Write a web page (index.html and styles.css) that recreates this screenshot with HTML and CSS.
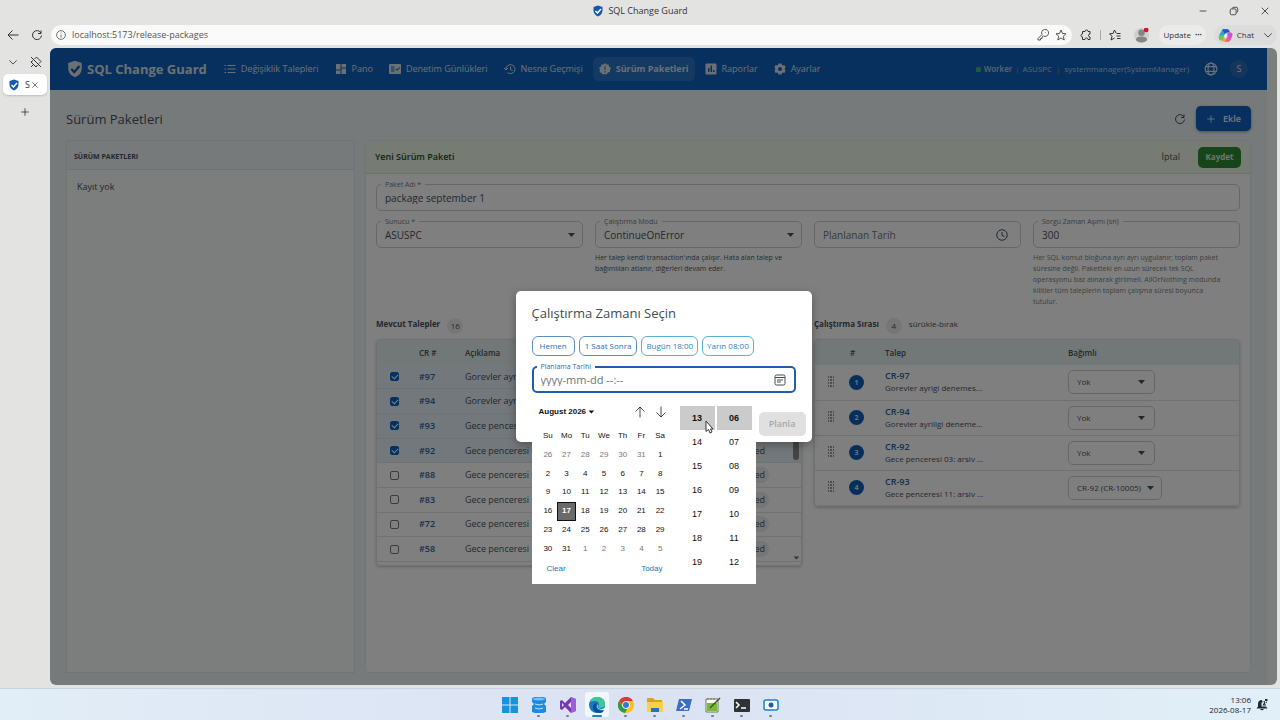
FILE: index.html
```html
<!DOCTYPE html>
<html lang="tr">
<head>
<meta charset="utf-8">
<title>SQL Change Guard</title>
<link rel="stylesheet" href="styles.css">
</head>
<body>
<svg class="defs" aria-hidden="true">
  <symbol id="shield" viewBox="0 0 24 24"><path fill="currentColor" d="M12 1 3 4v7c0 6 4 10 9 12 5-2 9-6 9-12V4z"/><path class="tick" d="m7 12 4 4 7-8"/></symbol>
  <symbol id="caret" viewBox="0 0 10 10"><path fill="currentColor" d="M2 3h7L5.500 7z"/></symbol>
  <symbol id="reload" viewBox="0 0 24 24"><path class="ln" d="M20 8A9 9 0 1 0 21 13M20 3v6h-6"/></symbol>
  <symbol id="chev" viewBox="0 0 24 24"><path class="ln" d="m3 8 9 9 9-9"/></symbol>
  <symbol id="cross" viewBox="0 0 24 24"><path class="ln" d="m4 4 16 16M20 4 4 20"/></symbol>
  <symbol id="plus" viewBox="0 0 24 24"><path class="ln" d="M12 3v18M3 12h18"/></symbol>
  <symbol id="grip" viewBox="0 0 8 12"><path fill="currentColor" d="M1 1h1v2H1zM3 1h2v2H3zM6 1h1v2H6zM1 4h1v2H1zM3 4h2v2H3zM6 4h1v2H6zM1 7h1v2H1zM3 7h2v2H3zM6 7h1v2H6zM1 10h1v2H1zM3 10h2v2H3zM6 10h1v2H6z"/></symbol>
</svg>

<header class="titlebar">
  <div class="wintitle"><svg class="i12 blue"><use href="#shield"/></svg><span>SQL Change Guard</span></div>
  <div class="winbtns">
    <button aria-label="Minimize"><svg class="i10" viewBox="0 0 24 24"><path class="ln" d="M4 12h16"/></svg></button>
    <button aria-label="Restore"><svg class="i10" viewBox="0 0 24 24"><rect class="ln" x="3" y="7" width="14" height="14" rx="3"/><path class="ln" d="M8 6q0-3 4-3h5q4 0 4 4v5q0 3-3 4"/></svg></button>
    <button aria-label="Close"><svg class="i10"><use href="#cross"/></svg></button>
  </div>
</header>

<div class="toolbar">
  <button class="back" aria-label="Back"><svg class="i12" viewBox="0 0 24 24"><path class="ln" d="M23 12H2M11 3l-9 9 9 9"/></svg></button>
  <button aria-label="Reload"><svg class="i12"><use href="#reload"/></svg></button>
  <div class="omnibox">
    <svg class="i10" viewBox="0 0 24 24"><circle class="ln" cx="12" cy="12" r="10.500"/><path class="ln" d="M12 11v7M12 6v2"/></svg>
    <input aria-label="Address" value="localhost:5173/release-packages">
    <svg class="i12" viewBox="0 0 24 24"><path class="ln" d="m10 11-8 8v3h5v-3h3v-3l3-2a7 7 0 1 0-3-3zM17 6v1"/></svg>
    <svg class="i12" viewBox="0 0 24 24"><path class="ln" d="m12 2 3 7 7 .5-5.500 5 2 7.500-6.500-4-6.500 4 2-7.500L2 9.500 9 9z"/></svg>
  </div>
  <button class="ext" aria-label="Extensions"><svg class="i12" viewBox="0 0 24 24"><path class="ln" d="M5 5h5a3 3 0 0 1 6 0h4v5a3 3 0 0 0 0 6v5h-4a3 3 0 0 0-6 0H5v-5a3 3 0 0 1 0-6z"/></svg></button>
  <span class="tsep"></span>
  <button aria-label="Favorites"><svg class="i12" viewBox="0 0 24 24"><path class="ln" d="m14 8-3-6-3 7-7 .5 5 5L4 22l7-4M15 9h8M15 14h8M16 19h7"/></svg></button>
  <button class="profile" aria-label="Profile"><svg viewBox="0 0 16 16"><circle cx="8" cy="8" r="8" fill="#cfcfcf"/><circle cx="8" cy="5" r="3.500" fill="#858585"/><path d="M2 13q0-4 6-4t6 4q-6 5-12 0" fill="#858585"/><circle cx="13" cy="2" r="2.500" fill="#d8122c"/></svg></button>
  <button class="update">Update <b>···</b></button>
  <button class="chat"><svg viewBox="0 0 24 24"><path d="M7 2h9l-5 14H5Q0 16 2 11z" fill="#24a7dd"/><path d="M7 2h8q3 0 4 5h-5q-2 0-3 3z" fill="#1b58c8"/><path d="M2 11l-1 4q0 4 4 5 3 1 4-3l1-5z" fill="#7bc04b"/><path d="M5 19q2 3 5 3h5q3 0 5-5h-8q-2 0-3-2-1 5-4 4" fill="#f4a43c"/><path d="M15 7h5q4 0 3 5l-2 5q-1 4-5 5-2-2-1-7z" fill="#d152c6"/><path d="M14 15l6 2q-2 5-5 5h-4z" fill="#f0607a"/><path d="M11 9h4l-2 6H9z" fill="#f2f2f2"/></svg>Chat <svg class="i10"><use href="#chev"/></svg></button>
</div>

<div class="frame">
  <aside class="tabs">
    <div class="tabtools">
      <button aria-label="Tabs"><svg class="i10"><use href="#chev"/></svg></button>
      <button aria-label="Unpin"><svg class="i12" viewBox="0 0 24 24"><path class="ln" d="M2 2l20 20M9 6l4-4 9 9-4 4M6 9l-4 3 10 10 3-4M2 22l6-6"/></svg></button>
    </div>
    <div class="tab"><svg class="i12 blue"><use href="#shield"/></svg><span>S</span><button aria-label="Close tab"><svg class="i8"><use href="#cross"/></svg></button></div>
    <button class="newtab" aria-label="New tab"><svg class="i10"><use href="#plus"/></svg></button>
  </aside>

  <div class="view">
    <div class="app">
      <nav class="nav">
        <div class="brand"><svg class="i18"><use href="#shield"/></svg><span>SQL Change Guard</span></div>
        <a href="#"><svg class="i12" viewBox="0 0 24 24"><path fill="currentColor" d="M1 4h3v2H1zM7 4h16v2H7zM1 11h3v2H1zM7 11h16v2H7zM1 18h3v2H1zM7 18h16v2H7z"/></svg>Değişiklik Talepleri</a>
        <a href="#"><svg class="i12" viewBox="0 0 24 24"><path fill="currentColor" d="M2 2h9v11H2zM13 2h9v7h-9zM13 11h9v11h-9zM2 15h9v7H2z"/></svg>Pano</a>
        <a href="#"><svg class="i12" viewBox="0 0 24 24"><path fill="currentColor" fill-rule="evenodd" d="M2 2h20q2 0 2 2v16q0 2-2 2H2q-2 0-2-2V4q0-2 2-2m2 5v2h7V7zm0 4v2h7v-2zm0 4v2h7v-2zm9-3 3 4 6-6-1-2-5 5-2-2z"/></svg>Denetim Günlükleri</a>
        <a href="#"><svg class="i12" viewBox="0 0 24 24"><path class="ln" d="M4 12a9 9 0 1 1 3 7M0 10l4 4 4-4M13 7v6l4 2"/></svg>Nesne Geçmişi</a>
        <a href="#" class="on"><svg class="i12" viewBox="0 0 24 24"><path fill="currentColor" fill-rule="evenodd" d="m12 0 3 3h4l1 4 4 3-2 4v4l-4 1-3 4-3-1-4 1-3-3-4-2 1-4-2-4 4-3 1-4h4zm-1 6v8h2V6zm0 10v3h2v-3z"/></svg>Sürüm Paketleri</a>
        <a href="#"><svg class="i12" viewBox="0 0 24 24"><path fill="currentColor" fill-rule="evenodd" d="M3 1h18q2 0 2 2v18q0 2-2 2H3q-2 0-2-2V3q0-2 2-2m3 9v8h3v-8zm5-5v13h3V5zm5 9v4h3v-4z"/></svg>Raporlar</a>
        <a href="#"><svg class="i12" viewBox="0 0 24 24"><path fill="currentColor" fill-rule="evenodd" d="M9 1h6l1 3 2 1 3-1 2 5-2 3 2 3-2 5-3-1-2 1-1 3H9l-1-3-2-1-3 1-2-5 2-3-2-3 2-5 3 1 2-1zm3 7a4 4 0 1 0 0 8 4 4 0 0 0 0-8"/></svg>Ayarlar</a>
        <div class="status"><i></i><b>Worker</b><em>|</em><span>ASUSPC</span><em class="wide">|</em><span>systemmanager(SystemManager)</span></div>
        <button class="globe" aria-label="Dil"><svg class="i14" viewBox="0 0 24 24"><circle class="ln" cx="12" cy="12" r="10"/><ellipse class="ln" cx="12" cy="12" rx="5" ry="10"/><path class="ln" d="M3 8h18M3 16h18"/></svg></button>
        <button class="avatar">S</button>
      </nav>

      <div class="pagehead">
        <h1>Sürüm Paketleri</h1>
        <button class="refresh" aria-label="Yenile"><svg class="i12"><use href="#reload"/></svg></button>
        <button class="add"><svg class="i10"><use href="#plus"/></svg>Ekle</button>
      </div>

      <main class="cols">
        <section class="list">
          <h2>SÜRÜM PAKETLERI</h2>
          <p>Kayıt yok</p>
        </section>
        <section class="editor">
          <header><h2>Yeni Sürüm Paketi</h2><button class="cancel">İptal</button><button class="save">Kaydet</button></header>
          <div class="form">
            <div class="field"><label for="name">Paket Adı *</label><input id="name" value="package september 1"></div>
            <div class="four">
              <div><div class="field"><label for="srv">Sunucu *</label><select id="srv"><option>ASUSPC</option></select><svg class="i10 arr"><use href="#caret"/></svg></div></div>
              <div><div class="field"><label for="mode">Çalıştırma Modu</label><select id="mode"><option>ContinueOnError</option></select><svg class="i10 arr"><use href="#caret"/></svg></div>
                <p class="help dark">Her talep kendi transaction'ında çalışır. Hata alan talep ve bağımlıları atlanır, diğerleri devam eder.</p></div>
              <div><div class="field"><input aria-label="Planlanan Tarih" placeholder="Planlanan Tarih"><svg class="i12 clock" viewBox="0 0 24 24"><circle class="ln" cx="12" cy="12" r="10.500"/><path class="ln" d="M12 6v7l5 2"/></svg></div></div>
              <div><div class="field"><label for="tmo">Sorgu Zaman Aşımı (sn)</label><input id="tmo" value="300"></div>
                <p class="help">Her SQL komut bloğuna ayrı ayrı uygulanır; toplam paket süresine değil. Paketteki en uzun sürecek tek SQL operasyonu baz alınarak girilmeli. AllOrNothing modunda kilitler tüm taleplerin toplam çalışma süresi boyunca tutulur.</p></div>
            </div>
            <div class="two">
              <div>
                <div class="subhead"><h3>Mevcut Talepler</h3><span class="count">16</span></div>
                <div class="tbox avail">
                  <table>
                    <thead><tr><th class="c1"></th><th class="c2">CR #</th><th>Açıklama</th><th class="c4"></th></tr></thead>
                    <tbody>
                      <tr class="sel"><td><input type="checkbox" aria-label="#97" checked></td><td><a href="#">#97</a></td><td>Gorevler ayrigi</td><td><span class="chip">Approved</span></td></tr>
                      <tr class="sel"><td><input type="checkbox" aria-label="#94" checked></td><td><a href="#">#94</a></td><td>Gorevler ayriligi</td><td><span class="chip">Approved</span></td></tr>
                      <tr class="sel"><td><input type="checkbox" aria-label="#93" checked></td><td><a href="#">#93</a></td><td>Gece penceresi 11</td><td><span class="chip">Approved</span></td></tr>
                      <tr class="sel"><td><input type="checkbox" aria-label="#92" checked></td><td><a href="#">#92</a></td><td>Gece penceresi 03</td><td><span class="chip">Approved</span></td></tr>
                      <tr><td><input type="checkbox" aria-label="#88"></td><td><a href="#">#88</a></td><td>Gece penceresi 0</td><td><span class="chip">Approved</span></td></tr>
                      <tr><td><input type="checkbox" aria-label="#83"></td><td><a href="#">#83</a></td><td>Gece penceresi 0</td><td><span class="chip">Approved</span></td></tr>
                      <tr><td><input type="checkbox" aria-label="#72"></td><td><a href="#">#72</a></td><td>Gece penceresi 1</td><td><span class="chip">Approved</span></td></tr>
                      <tr><td><input type="checkbox" aria-label="#58"></td><td><a href="#">#58</a></td><td>Gece penceresi 1</td><td><span class="chip">Approved</span></td></tr>
                    </tbody>
                  </table>
                  <div class="sbar"><i></i><svg class="i8"><use href="#caret"/></svg></div>
                </div>
              </div>
              <div>
                <div class="subhead"><h3>Çalıştırma Sırası</h3><span class="count">4</span><small>sürükle-bırak</small></div>
                <div class="tbox order">
                  <table>
                    <thead><tr><th class="d1"></th><th class="d2">#</th><th class="d3">Talep</th><th>Bağımlı</th></tr></thead>
                    <tbody>
                      <tr><td><svg class="grip"><use href="#grip"/></svg></td><td><b class="num">1</b></td><td><a href="#">CR-97</a><p>Gorevler ayrigi denemes...</p></td><td><div class="dd"><select aria-label="Bağımlı CR-97"><option>Yok</option></select><svg class="i10 arr"><use href="#caret"/></svg></div></td></tr>
                      <tr><td><svg class="grip"><use href="#grip"/></svg></td><td><b class="num">2</b></td><td><a href="#">CR-94</a><p>Gorevler ayriligi deneme...</p></td><td><div class="dd"><select aria-label="Bağımlı CR-94"><option>Yok</option></select><svg class="i10 arr"><use href="#caret"/></svg></div></td></tr>
                      <tr><td><svg class="grip"><use href="#grip"/></svg></td><td><b class="num">3</b></td><td><a href="#">CR-92</a><p>Gece penceresi 03: arsiv ...</p></td><td><div class="dd"><select aria-label="Bağımlı CR-92"><option>Yok</option></select><svg class="i10 arr"><use href="#caret"/></svg></div></td></tr>
                      <tr><td><svg class="grip"><use href="#grip"/></svg></td><td><b class="num">4</b></td><td><a href="#">CR-93</a><p>Gece penceresi 11: arsiv ...</p></td><td><div class="dd wide"><select aria-label="Bağımlı CR-93"><option>CR-92 (CR-10005)</option></select><svg class="i10 arr"><use href="#caret"/></svg></div></td></tr>
                    </tbody>
                  </table>
                </div>
              </div>
            </div>
          </div>
        </section>
      </main>
    </div>

    <div class="overlay">
      <div class="dialog" role="dialog" aria-labelledby="dt">
        <h2 id="dt">Çalıştırma Zamanı Seçin</h2>
        <div class="quick"><button>Hemen</button><button>1 Saat Sonra</button><button class="lt">Bugün 18:00</button><button class="lt">Yarın 08:00</button></div>
        <div class="field focus"><label for="when">Planlama Tarihi</label><input id="when" placeholder="yyyy-mm-dd --:--"><svg class="i12 clock" viewBox="0 0 24 24"><rect class="ln" x="2" y="2" width="20" height="20" rx="3"/><path class="ln" d="M2 7h20M6 12h12M6 16h8"/></svg></div>
        <button class="plan" disabled>Planla</button>
        <div class="picker">
          <div class="cal">
            <div class="calhead"><button class="month">August 2026<svg class="i8"><use href="#caret"/></svg></button>
              <button aria-label="Previous month"><svg class="i12" viewBox="0 0 24 24"><path class="ln" d="M12 23V2M3 11l9-9 9 9"/></svg></button>
              <button aria-label="Next month"><svg class="i12" viewBox="0 0 24 24"><path class="ln" d="M12 1v21M3 13l9 9 9-9"/></svg></button></div>
            <table>
              <tbody>
                <tr><th>Su</th><th>Mo</th><th>Tu</th><th>We</th><th>Th</th><th>Fr</th><th>Sa</th></tr>
                <tr><td class="o">26</td><td class="o">27</td><td class="o">28</td><td class="o">29</td><td class="o">30</td><td class="o">31</td><td>1</td></tr>
                <tr><td>2</td><td>3</td><td>4</td><td>5</td><td>6</td><td>7</td><td>8</td></tr>
                <tr><td>9</td><td>10</td><td>11</td><td>12</td><td>13</td><td>14</td><td>15</td></tr>
                <tr><td>16</td><td class="today">17</td><td>18</td><td>19</td><td>20</td><td>21</td><td>22</td></tr>
                <tr><td>23</td><td>24</td><td>25</td><td>26</td><td>27</td><td>28</td><td>29</td></tr>
                <tr><td>30</td><td>31</td><td class="o">1</td><td class="o">2</td><td class="o">3</td><td class="o">4</td><td class="o">5</td></tr>
              </tbody>
            </table>
            <div class="calfoot"><button>Clear</button><button>Today</button></div>
          </div>
          <div class="times"><button class="cur">13</button><button>14</button><button>15</button><button>16</button><button>17</button><button>18</button><button>19</button></div>
          <div class="times"><button class="cur">06</button><button>07</button><button>08</button><button>09</button><button>10</button><button>11</button><button>12</button></div>
          <svg class="cursor" viewBox="0 0 9 14"><path d="M1 1v10.500l2.500-2 1.500 3.500 2-1-1.500-3H8z" fill="#fff" stroke="#333"/></svg>
        </div>
      </div>
    </div>
  </div>
</div>

<footer class="taskbar">
  <div class="apps">
    <button aria-label="Start"><svg viewBox="0 0 16 16"><path fill="#1495dc" d="M0 0h7.500v7.500H0zM8.500 0H16v7.500H8.500zM0 8.500h7.500V16H0zM8.500 8.500H16V16H8.500z"/></svg></button>
    <button class="run" aria-label="Database"><svg viewBox="0 0 16 16"><path fill="#2088df" d="M1 1q7-3 14 0v4l-2 2 2 2v6q-7 3-14 0V9l2-2-2-2z"/><path fill="#6cc7f7" d="M1 2q7-3 14 0-7 3-14 0"/><path fill="none" stroke="#bfe6fb" d="M4 7q4 2 8 0M4 11q4 2 8 0"/></svg></button>
    <button class="run" aria-label="Visual Studio"><svg viewBox="0 0 16 16"><path fill="#7b35b8" d="m11 0 5 2v12l-5 2-6-6-3 3-2-1V4l2-1 3 3zm0 5L8 8l3 3zM2 6v4l2-2z"/><path fill="#b57ae6" d="m11 0 5 2v12l-5 2z" opacity=".6"/></svg></button>
    <button class="run active" aria-label="Edge"><svg viewBox="0 0 16 16"><circle cx="8" cy="8" r="8" fill="#1479c4"/><path fill="#43c59a" d="M1 5Q3 0 8 0q8 0 8 7 0 4-5 4-3-1-1-3 0-4-4-4-3 0-5 1"/><path fill="#0d4d94" d="M4 9q-1 7 7 7 3 0 4-3-5 2-7-1Q6 9 8 6 5 6 4 9"/><path fill="#e9f5fb" d="M9 7q-2 5 4 5l3-1-1 2q-7 0-7-4z"/></svg></button>
    <button class="run" aria-label="Chrome"><svg viewBox="0 0 16 16"><circle cx="8" cy="8" r="8" fill="#fbc116"/><path fill="#dc3c2e" d="M1 4a8 8 0 0 1 14 0H8L5 9z"/><path fill="#2b9b49" d="m1 4 4 6 4 2-2 4A8 8 0 0 1 1 4"/><circle cx="8" cy="8" r="3.800" fill="#fff"/><circle cx="8" cy="8" r="3" fill="#3476dc"/></svg></button>
    <button class="run" aria-label="Explorer"><svg viewBox="0 0 16 16"><path fill="#dda21b" d="M0 1h6l2 2h7v5H0z"/><path fill="#fcd04d" d="M0 5h16v10H0z"/><path fill="#1f78b8" d="M4 11h8v4H4z"/></svg></button>
    <button class="run" aria-label="PowerShell"><svg viewBox="0 0 16 16"><path fill="#3c6fc4" d="M3 2h13l-3 12H0z"/><path fill="none" stroke="#fff" stroke-width="1.500" d="m5 4 4 4-5 4M8 12h4"/></svg></button>
    <button class="run" aria-label="Notepad++"><svg viewBox="0 0 16 16"><path fill="#fafaf2" stroke="#6d7a55" d="M1 2h12v13H1z"/><path fill="#75bd34" d="M2 6h10v8H2z"/><path stroke="#44512b" stroke-width="1.500" d="M5 11 15 1"/><path stroke="#779" d="M3 1v2M6 1v2M9 1v2"/></svg></button>
    <button class="run" aria-label="Terminal"><svg viewBox="0 0 16 16"><rect y="2" width="16" height="13" rx="1" fill="#2f3336"/><path fill="none" stroke="#fff" stroke-width="1.500" d="m2 5 3 3-3 3M7 11h5"/></svg></button>
    <button class="run" aria-label="Recorder"><svg viewBox="0 0 16 16"><rect x="1" y="3" width="14" height="10" rx="2" fill="#fff" stroke="#1780cf" stroke-width="1.500"/><circle cx="8" cy="8" r="2.500" fill="#28589b"/></svg></button>
  </div>
  <div class="tray"><div><div>13:06</div><div>2026-08-17</div></div><svg class="i12" viewBox="0 0 24 24"><path fill="#1d2a31" d="M4 10q0-8 8-8l1 5h-2v8h9l3 4H1l3-4zM8 20h8q-4 5-8 0"/><path fill="#1d2a31" d="M13 5h4l-4 8h7v-2h-3l4-7h-8zM18 0h5v4h-3l2 4h-4z"/></svg></div>
</footer>
</body>
</html>
```

FILE: styles.css
```css
* { box-sizing: border-box; }
body { margin: 0; height: 100vh; display: flex; flex-direction: column; overflow: hidden; background: #e3e3e2; color: #333; font-family: "Open Sans", "Noto Sans", sans-serif; font-size: 9px; line-height: 12px; }
h1, h2, h3, p { margin: 0; }
button, input, select { font: inherit; color: inherit; background: none; border: 0; padding: 0; margin: 0; min-width: 0; }
button { display: flex; align-items: center; justify-content: center; }
a { text-decoration: none; color: inherit; }
svg { flex: none; display: block; }
.defs { position: absolute; width: 0; height: 0; }
.ln { fill: none; stroke: currentColor; stroke-width: 2; }
.tick { fill: none; stroke: var(--tick, #1458a4); stroke-width: 3; }
.blue { color: #1459ac; --tick: #fff; }
.i8 { width: 8px; height: 8px; }
.i10 { width: 10px; height: 10px; }
.i12 { width: 12px; height: 12px; }
.i14 { width: 14px; height: 14px; }
.i18 { width: 18px; height: 18px; }

.titlebar { height: 22px; display: flex; align-items: center; justify-content: flex-end; position: relative; flex: none; }
.wintitle { position: absolute; left: 0; right: 0; display: flex; justify-content: center; align-items: center; gap: 4px; }
.winbtns { display: flex; gap: 21px; padding-right: 10px; }
.toolbar { height: 26px; flex: none; display: flex; align-items: center; padding: 0 3px 0 7px; gap: 8px; }
.back { margin-right: 4px; }
.omnibox { flex: 1; height: 20px; background: #fafafa; border-radius: 10px; display: flex; align-items: center; gap: 6px; padding: 0 5px; color: #555; }
.omnibox input { flex: 1; outline: none; }
.tsep { width: 1px; height: 10px; background: #aaa; }
.profile svg { width: 15px; height: 15px; }
.profile { margin: 0 2px 0 5px; }
.update, .chat { height: 20px; border-radius: 10px; background: #ebebeb; padding: 0 4px; gap: 4px; font-size: 8px; }
.chat { gap: 4px; background: #dcdcdc; }
.chat > svg:first-child { width: 15px; height: 15px; }
.chat .i10 { margin-left: 5px; }

.frame { flex: 1; display: flex; min-height: 0; padding-right: 3px; }
.tabs { width: 50px; flex: none; padding: 8px 3px; display: flex; flex-direction: column; }
.tabtools { display: flex; justify-content: space-between; padding: 0 5px; }
.tab { margin-top: 6px; height: 21px; background: #fff; border-radius: 5px; display: flex; align-items: center; padding: 0 5px; gap: 5px; box-shadow: 0 1px 2px #bbb; }
.tab span { width: 5px; overflow: hidden; margin-right: -4px; }
.newtab { margin: 12px auto 0 17px; height: 10px; }

.view { flex: 1; position: relative; overflow: hidden; border-radius: 6px; background: #f8fafb; padding-right: 10px; min-width: 0; }
.app { height: 100%; display: flex; flex-direction: column; background: #edf4f6; color: #47505a; }
.nav { height: 42px; flex: none; background: #0e60bd; color: #d6e1ea; display: flex; align-items: center; padding: 0 19px 0 16px; gap: 4px; }
.brand { display: flex; align-items: center; gap: 3px; font-size: 13px; font-weight: 700; margin-right: 7px; }
.nav a { display: flex; align-items: center; gap: 5px; height: 24px; padding: 0 6px; border-radius: 5px; white-space: nowrap; }
.nav a.on { background: #2872c4; font-weight: 700; }
.status { margin-left: auto; display: flex; align-items: center; gap: 3px; font-size: 8px; color: #b3cbe2; }
.status b { font-weight: 600; }
.status i { width: 5px; height: 5px; background: #4caf70; border-radius: 1px; }
.status em { font-style: normal; color: #6b98c8; }
.status em.wide { margin: 0 1px; }
.globe { margin: 0 8px 0 11px; }
.avatar { width: 18px; height: 18px; border-radius: 50%; background: #2a6cb4; }
.pagehead { display: flex; align-items: center; padding: 16px 16px 9px; height: 50px; flex: none; }
h1 { font-size: 13px; line-height: 20px; font-weight: 500; margin-right: auto; }
.refresh { margin-right: 10px; }
.add { background: #0e60c0; color: #e8f0fa; width: 55px; height: 25px; border-radius: 5px; gap: 7px; font-weight: 600; box-shadow: 0 1px 3px #999; }
.cols { flex: 1; display: grid; grid-template-columns: 289px 1fr; gap: 10px; padding: 0 16px 12px; min-height: 0; }
.list { border: 1px solid #e1e8eb; background: #f9fafb; }
.list h2 { background: #eff5f7; font-size: 7px; font-weight: 700; padding: 10px 7px 6px; border-bottom: 1px solid #dfe6e9; }
.list p { padding: 11px 10px; }
.editor { background: #fff; border: 1px solid #e5eaec; border-radius: 4px; min-width: 0; }
.editor > header { background: #ecf8e9; height: 33px; display: flex; align-items: center; padding: 0 9px; border-bottom: 1px solid #d5e2d2; border-radius: 4px 4px 0 0; }
.editor > header h2 { font-size: 9px; font-weight: 600; color: #1a4a20; margin-right: auto; }
.cancel { margin-right: 18px; }
.save { width: 43px; height: 21px; background: #2d8a34; color: #d9eeda; border-radius: 5px; font-weight: 700; font-size: 8px; }
.form { padding: 10px 10px 0; }
.field { height: 27px; border: 1px solid #cdcfd0; border-radius: 5px; position: relative; display: flex; align-items: center; padding: 0 8px; font-size: 10px; }
.field label { position: absolute; top: -5px; left: 4px; padding: 0 4px; line-height: 9px; font-size: 7px; color: #777; background: #fff; }
.field input { flex: 1; outline: none; }
.field input::placeholder { color: #6b747a; opacity: 1; }
.field select, .dd select { flex: 1; appearance: none; outline: none; }
.arr { pointer-events: none; }
.field .arr { margin-right: -2px; }
.clock { margin-right: 4px; }
.four { display: grid; grid-template-columns: repeat(4, 1fr); gap: 12px; margin-top: 10px; }
.help { font-size: 7px; line-height: 11px; margin-top: 4px; padding-right: 13px; color: #777f84; }
.help.dark { color: #4d565b; }
.two { display: grid; grid-template-columns: 1fr 1fr; gap: 12px; margin-top: 5px; }
.subhead { display: flex; align-items: center; gap: 7px; height: 27px; padding-bottom: 3px; }
h3 { font-size: 8px; font-weight: 700; }
.count { min-width: 16px; height: 16px; line-height: 16px; text-align: center; border-radius: 8px; background: #ececec; font-size: 8px; margin-top: 3px; padding: 0 3px; }
small { font-size: 8px; }
.tbox { border: 1px solid #dde2e4; border-radius: 4px; overflow: hidden; position: relative; box-shadow: 0 1px 3px #c5c5c5; }
.tbox table { width: 100%; border-collapse: collapse; table-layout: fixed; }
.tbox th { background: #e5f0f0; text-align: left; font-size: 8px; font-weight: 600; padding: 0; height: 25px; }
.tbox td { padding: 0; border-bottom: 1px solid #e3e3e3; }
.tbox td a { color: #28619d; font-weight: 600; }
.avail { height: 227px; }
.avail table { height: 222px; }
.c1 { width: 42px; } .c2 { width: 46px; } .c4 { width: 92px; }
.avail td:first-child { padding-left: 13px; }
.sel td { background: #e7f1f8; }
.avail input { appearance: none; display: block; width: 9px; height: 9px; border: 1px solid #777; border-radius: 2px; position: relative; }
.avail input:checked { background: #0d62c2; border-color: #0d62c2; }
.avail input:checked::after { content: ""; position: absolute; left: 2px; top: 0; width: 3px; height: 5px; border: solid #fff; border-width: 0 1px 1px 0; transform: rotate(45deg); }
.chip { display: block; background: #ececec; border-radius: 8px; height: 16px; line-height: 16px; padding: 0 4px; width: 60px; text-align: right; }
.sbar { position: absolute; right: 1px; top: 0; bottom: 3px; width: 8px; }
.sbar i { position: absolute; top: 26px; left: 1px; width: 6px; height: 94px; border-radius: 3px; background: #8a8a8a; }
.sbar svg { position: absolute; bottom: 0; color: #666; }
.d1 { width: 28px; } .d2 { width: 42px; } .d3 { width: 183px; }
.order .d2 { padding-left: 7px; }
.order tbody tr { height: 35px; }
.order td p { font-size: 8px; line-height: 12px; }
.grip { width: 8px; height: 12px; margin: 0 0 3px 12px; color: #999; }
.num { display: block; width: 15px; height: 15px; line-height: 15px; margin-left: 6px; text-align: center; border-radius: 50%; background: #0d5fb8; color: #d6e4f2; font-size: 7px; }
.dd { width: 87px; height: 24px; border: 1px solid #cdcfd0; border-radius: 5px; display: flex; align-items: center; padding: 0 8px; font-size: 8px; }
.dd.wide { width: 94px; padding-right: 6px; }

.overlay { position: absolute; inset: 0; background: rgba(0, 0, 0, .5); display: flex; align-items: center; justify-content: center; }
.dialog { width: 296px; height: 151px; background: #fff; border-radius: 5px; padding: 12px 16px; position: relative; color: #424c54; box-shadow: 0 3px 10px rgba(0, 0, 0, .3); }
.dialog h2 { font-size: 13px; font-weight: 500; line-height: 20px; }
.quick { display: flex; gap: 4px; margin: 13px 0 10px; }
.quick button { height: 20px; border: 1px solid #5c8fc4; border-radius: 6px; color: #2b6fb3; padding: 0 5px; font-size: 8px; font-weight: 500; white-space: nowrap; }
.quick button:first-child { padding: 0 7px; }
.quick .lt { border-color: #5aaedb; color: #2585c0; padding: 0 4px; }
.focus { border: 2px solid #1c5fae; padding: 0 7px; font-size: 11px; }
.focus label { color: #2868b0; left: 3px; top: -6px; }
.focus .clock { margin-right: 1px; }
.plan { position: absolute; right: 6px; bottom: 6px; width: 47px; height: 24px; background: #e0e0e0; color: #a8a8a8; border-radius: 5px; font-weight: 600; }
.picker { position: absolute; top: 106px; left: 16px; width: 224px; height: 187px; background: #fff; font-family: "Liberation Sans", Arial, sans-serif; font-size: 8px; color: #111; display: flex; gap: 2px; padding: 9px 4px 8px 7px; }
.cal { width: 131px; margin-right: 8px; }
.calhead { display: flex; align-items: center; height: 12px; gap: 9px; padding-right: 3px; }
.calhead .ln { stroke-width: 1.5; }
.month { font-weight: 700; margin-right: auto; gap: 1px; }
.cal table { width: 131px; height: 131px; margin-top: 9px; border-collapse: collapse; table-layout: fixed; text-align: center; }
.cal th, .cal td { padding: 0; height: 18px; font-weight: 400; line-height: 10px; }
.cal .o { color: #777; }
.cal .today { background: #6a6a6a; color: #fff; font-weight: 700; outline: 1px solid #111; outline-offset: -1px; }
.calfoot { display: flex; justify-content: space-between; color: #1377b5; padding: 5px 7px 0 8px; }
.times { width: 35px; font-size: 9px; }
.times button { width: 35px; height: 24px; }
.times .cur { background: #cbcbcb; font-weight: 700; }
.cursor { position: absolute; left: 173px; top: 23px; width: 9px; height: 14px; }

.taskbar { height: 32px; margin-top: 3px; flex: none; border-top: 1px solid #ccd3dd; background: linear-gradient(90deg, #e1edf7, #dbe2f3 50%, #e1f0f8); display: grid; grid-template-columns: 1fr auto 1fr; align-items: center; }
.apps { grid-column: 2; display: flex; gap: 5px; }
.apps button { width: 24px; height: 25px; border-radius: 3px; position: relative; }
.apps svg { width: 16px; height: 16px; }
.apps .active { background: #f2f7fa; }
.run::after { content: ""; position: absolute; bottom: 0; width: 3px; height: 2px; background: #777f89; border-radius: 1px; }
.run.active::after { width: 10px; background: #2083b2; }
.tray { display: flex; justify-content: flex-end; align-items: center; gap: 5px; text-align: right; padding-right: 12px; font-size: 8px; line-height: 10px; color: #223; }
```
